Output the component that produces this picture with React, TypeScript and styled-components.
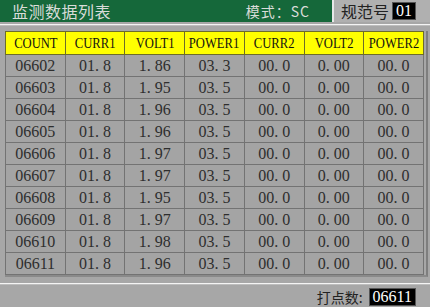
import styled, { createGlobalStyle } from "styled-components";

const GlobalStyle = createGlobalStyle`
    body {
        margin: 0;
        background: #a7a7a7;
        font-family: "Liberation Serif", "Noto Sans CJK SC", serif;
    }
`;

const columns = ["COUNT", "CURR1", "VOLT1", "POWER1", "CURR2", "VOLT2", "POWER2"];

const rows = [
    ["06602", "01. 8", "1. 86", "03. 3"],
    ["06603", "01. 8", "1. 95", "03. 5"],
    ["06604", "01. 8", "1. 96", "03. 5"],
    ["06605", "01. 8", "1. 96", "03. 5"],
    ["06606", "01. 8", "1. 97", "03. 5"],
    ["06607", "01. 8", "1. 97", "03. 5"],
    ["06608", "01. 8", "1. 95", "03. 5"],
    ["06609", "01. 8", "1. 97", "03. 5"],
    ["06610", "01. 8", "1. 98", "03. 5"],
    ["06611", "01. 8", "1. 96", "03. 5"],
];

// rows whose top line is drawn darker on the screen
const darkLines = [6, 8];

const Screen = styled.div`
    width: 430px;
    height: 307px;
    display: flex;
    flex-direction: column;
    background: #a7a7a7;
    overflow: hidden;
`;

const TopBar = styled.div`
    display: flex;
    height: 22px;
`;

const TitleBar = styled.div`
    flex: 0 0 332px;
    display: flex;
    align-items: center;
    justify-content: space-between;
    padding: 0 22px 0 12px;
    box-sizing: border-box;
    background: #15683a;
    color: #d9dcd9;
`;

const Title = styled.span`
    font-family: "Noto Sans CJK SC", sans-serif;
    font-size: 16px;
    letter-spacing: 0.5px;
`;

const Mode = styled.span`
    font-family: "Noto Sans CJK SC", sans-serif;
    font-size: 14px;
    letter-spacing: 1px;
`;

const SpecBox = styled.div`
    flex: 1;
    display: flex;
    align-items: center;
    gap: 3px;
    padding-left: 7px;
    background: #b0b0b0;
    border-left: 2px solid #e8e8e8;
    font-family: "Noto Sans CJK SC", sans-serif;
    font-size: 16px;
    color: #222;
`;

const ValueBox = styled.span<{ $size: number }>`
    display: inline-flex;
    align-items: center;
    padding: 0 3px;
    background: #000;
    color: #fff;
    border: 1px solid #555;
    font-family: "Liberation Serif", serif;
    font-size: ${(p) => p.$size}px;
    line-height: 1;
    height: ${(p) => p.$size}px;
`;

const Divider = styled.div`
    height: 1px;
    margin-top: 2px;
    background: #f4f4f4;
    border-bottom: 1px solid #bdbdbd;
`;

const TableWrap = styled.div`
    margin: 5px 0 0 5px;
    width: 421px;
    border-right: 2px solid #7e7e7e;
    border-bottom: 2px solid #8a8a8a;
`;

const Grid = styled.table`
    border-collapse: collapse;
    width: 419px;
    table-layout: fixed;
`;

const HeadCell = styled.th`
    height: 22px;
    padding: 0;
    background: #ffff00;
    border: 1px solid #6c6c2a;
    color: #111;
    font-weight: normal;
`;

const HeadText = styled.span`
    display: inline-block;
    margin: 0 -10px;
    font-size: 15px;
    transform: scaleX(0.84);
    white-space: nowrap;
`;

const Cell = styled.td<{ $dark: boolean }>`
    height: 21px;
    padding: 0;
    text-align: center;
    background: #a4a4a4;
    border: 1px solid #737373;
    border-top-color: ${(p) => (p.$dark ? "#1c1c1c" : "#737373")};
    color: #2e2e2e;
    font-size: 16px;
    line-height: 1;
`;

const BottomDivider = styled(Divider)`
    margin-top: 6px;
`;

const Footer = styled.div`
    flex: 1;
    display: flex;
    align-items: center;
    justify-content: flex-end;
    gap: 6px;
    padding: 2px 14px 0 0;
    font-family: "Noto Sans CJK SC", sans-serif;
    font-size: 14px;
    color: #222;
`;

const FooterLabel = styled.span`
    line-height: 16px;
`;

const App = () => {
    return (
        <Screen>
            <GlobalStyle />
            <TopBar>
                <TitleBar>
                    <Title>监测数据列表</Title>
                    <Mode>模式：SC</Mode>
                </TitleBar>
                <SpecBox>
                    规范号 <ValueBox $size={16}>01</ValueBox>
                </SpecBox>
            </TopBar>
            <Divider />
            <TableWrap>
                <Grid>
                    <thead>
                        <tr>
                            {columns.map((c) => (
                                <HeadCell key={c}>
                                    <HeadText>{c}</HeadText>
                                </HeadCell>
                            ))}
                        </tr>
                    </thead>
                    <tbody>
                        {rows.map((r, i) => (
                            <tr key={r[0]}>
                                {[...r, "00. 0", "0. 00", "00. 0"].map((v, j) => (
                                    <Cell key={j} $dark={darkLines.includes(i)}>
                                        {v}
                                    </Cell>
                                ))}
                            </tr>
                        ))}
                    </tbody>
                </Grid>
            </TableWrap>
            <BottomDivider />
            <Footer>
                <FooterLabel>打点数:</FooterLabel>
                <ValueBox $size={16}>06611</ValueBox>
            </Footer>
        </Screen>
    );
};

export default App;
